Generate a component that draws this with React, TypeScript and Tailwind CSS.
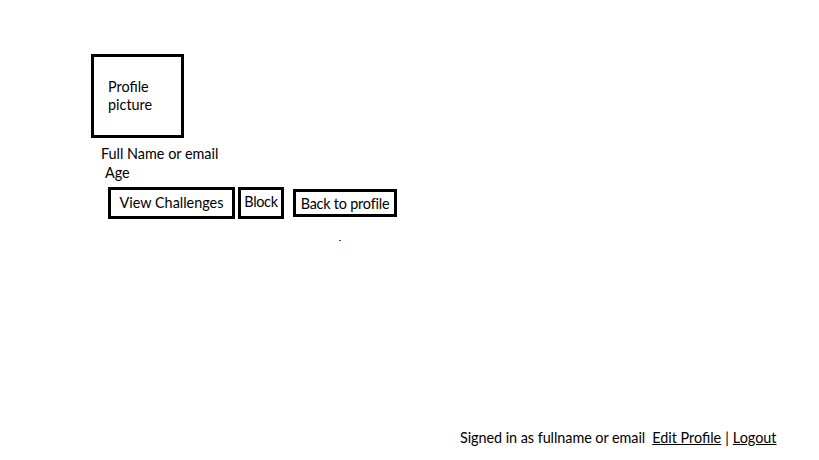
import React from "react";

export default function App() {
  return (
    <div className="relative w-[819px] h-[460px] bg-white text-black font-['Lato',sans-serif] text-[14.4px] leading-[18px] flex flex-col">
      <div className="pt-[54px] pl-[91px]">
        <div className="w-[93px] h-[84px] border-[3px] border-black pl-[14px] pt-[21px]">
          <div>Profile</div>
          <div>picture</div>
        </div>
      </div>
      <div className="pl-[101px] mt-[7px]">Full Name or email</div>
      <div className="pl-[105px] mt-[1px]">Age</div>
      <div className="flex items-start pl-[108px] mt-[5px]">
        <div className="w-[127px] h-[32px] border-[3px] border-black flex justify-center pt-[4px]">View Challenges</div>
        <div className="ml-[3px] w-[46px] h-[32px] border-[3px] border-black flex justify-center pt-[3px] tracking-[-0.3px]">Block</div>
        <div className="ml-[9px] mt-[2px] w-[104px] h-[28px] border-[3px] border-black flex justify-center pt-[3px] tracking-[-0.2px]">Back to profile</div>
      </div>
      <div className="pl-[339px] mt-[21px]">
        <div className="w-[2px] h-[1px] bg-[#0a6a8a]" />
      </div>
      <div className="mt-auto mb-[13px] flex pl-[460px] items-center">
        <span className="tracking-[-0.05px]">Signed in as fullname or email</span>
        <span className="ml-[7px] underline">Edit Profile</span>
        <span className="mx-[4px]">|</span>
        <span className="underline">Logout</span>
      </div>
    </div>
  );
}
